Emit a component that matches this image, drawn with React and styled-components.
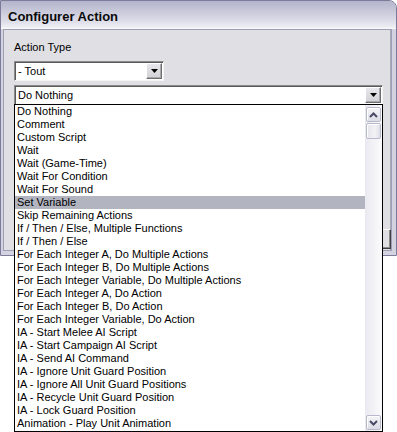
import React from "react";
import styled, { createGlobalStyle } from "styled-components";

const Global = createGlobalStyle`
  html, body { margin: 0; padding: 0; background: #ffffff; }
  body { font-family: "Liberation Sans", Arial, sans-serif; }
`;

const Stage = styled.div`
  position: relative;
  width: 397px;
  height: 432px;
  overflow: hidden;
  background: #ffffff;
`;

const Window = styled.div`
  box-sizing: border-box;
  width: 397px;
  height: 256px;
  display: flex;
  flex-direction: column;
  border: 1px solid #7c7c9a;
  border-top-right-radius: 8px;
  background: linear-gradient(to right, #d2d2e0, #e6e6f0 40%, #d2d2e0);
  padding: 0 4px 4px 2px;
`;

const TitleBar = styled.div`
  box-sizing: border-box;
  height: 28px;
  margin: 0 -4px 0 -2px;
  padding: 8px 0 0 7px;
  border-top-right-radius: 7px;
  background: linear-gradient(to bottom, #b4b4cb 0%, #c8c8da 35%, #dcdce8 70%, #ececf2 92%, #fbfbfd 100%);
  font: bold 13px/15px "Liberation Sans", Arial, sans-serif;
  color: #0a0a0a;
  white-space: nowrap;
`;

const Frame = styled.div`
  flex: 1;
  display: flex;
  flex-direction: column;
  background: #e0dfe3;
  border: 1px solid #9e9eb4;
  padding: 11px 0 0 10px;
  box-shadow: inset -4px 0 0 -3px #a9a9b8;
`;

const Label = styled.div`
  font: 11px/13px "Liberation Sans", Arial, sans-serif;
  color: #000;
`;

const Combo = styled.div`
  box-sizing: border-box;
  width: ${(p) => p.$w}px;
  height: 20px;
  margin-top: ${(p) => p.$mt}px;
  display: flex;
  align-items: center;
  padding: 1px;
  background: #fff;
  border: 1px solid;
  border-color: #8a8a8a #f4f4f4 #f4f4f4 #8a8a8a;
  box-shadow: inset 1px 1px 0 #5a5a5a;
`;

const ComboText = styled.div`
  flex: 1;
  padding-left: 2px;
  font: 11px/13px "Liberation Sans", Arial, sans-serif;
  color: #000;
  white-space: nowrap;
  overflow: hidden;
`;

const ArrowButton = styled.div`
  box-sizing: border-box;
  width: 16px;
  height: 16px;
  display: flex;
  align-items: center;
  justify-content: center;
  background: linear-gradient(#e8e8ec, #d2d1d6);
  border: 1px solid;
  border-color: #ffffff #6e6e6e #6e6e6e #ffffff;
  box-shadow: inset -1px -1px 0 #a8a8ae;
`;

const Spacer = styled.div`
  flex: 1;
`;

const ButtonRow = styled.div`
  display: flex;
  justify-content: flex-end;
  padding-bottom: 1px;
`;

const PushButton = styled.div`
  box-sizing: border-box;
  width: 75px;
  height: 20px;
  background: #e0dfe3;
  border: 1px solid;
  border-color: #ffffff #404040 #404040 #ffffff;
  box-shadow: inset -1px -1px 0 #8c8c8c;
`;

const Popup = styled.div`
  position: absolute;
  left: 14px;
  top: 104px;
  box-sizing: border-box;
  width: 369px;
  height: 328px;
  display: flex;
  background: #fff;
  border: 1px solid #000;
`;

const Items = styled.div`
  flex: 1;
  min-width: 0;
  display: flex;
  flex-direction: column;
`;

const Item = styled.div`
  height: 13px;
  padding-left: 2px;
  font: 11px/13px "Liberation Sans", Arial, sans-serif;
  color: #000;
  white-space: nowrap;
  overflow: hidden;
  background: ${(p) => (p.$selected ? "#b2b4c0" : "transparent")};
`;

const ScrollBar = styled.div`
  box-sizing: border-box;
  width: 17px;
  display: flex;
  flex-direction: column;
  padding: 2px 1px 1px 1px;
  background: linear-gradient(to right, #e9e9f0, #f6f6f9 70%, #fbfbfd);
`;

const ScrollButton = styled.div`
  box-sizing: border-box;
  width: 15px;
  height: 15px;
  display: flex;
  align-items: center;
  justify-content: center;
  border: 1px solid #b9b9cc;
  border-radius: 2px;
  background: linear-gradient(#f4f4f8, #dcdce6);
  box-shadow: inset 1px 1px 0 #ffffff;
`;

const Thumb = styled.div`
  box-sizing: border-box;
  width: 15px;
  height: 16px;
  margin-top: 1px;
  border: 1px solid #b9b9cc;
  border-radius: 2px;
  background: linear-gradient(to right, #e4e4ec, #f2f2f6 60%, #dedee8);
  box-shadow: inset 1px 1px 0 #ffffff;
`;

const DownTriangle = () => (
  <svg width="7" height="4" viewBox="0 0 7 4">
    <polygon points="0,0 7,0 3.5,4" fill="#000" />
  </svg>
);

const Chevron = ({ up }) => (
  <svg width="9" height="6" viewBox="0 0 9 6">
    <polyline
      points={up ? "1,5 4.5,1.5 8,5" : "1,1 4.5,4.5 8,1"}
      fill="none"
      stroke="#4a4a66"
      strokeWidth="2"
    />
  </svg>
);

const ITEMS = [
  "Do Nothing",
  "Comment",
  "Custom Script",
  "Wait",
  "Wait (Game-Time)",
  "Wait For Condition",
  "Wait For Sound",
  "Set Variable",
  "Skip Remaining Actions",
  "If / Then / Else, Multiple Functions",
  "If / Then / Else",
  "For Each Integer A, Do Multiple Actions",
  "For Each Integer B, Do Multiple Actions",
  "For Each Integer Variable, Do Multiple Actions",
  "For Each Integer A, Do Action",
  "For Each Integer B, Do Action",
  "For Each Integer Variable, Do Action",
  "IA - Start Melee AI Script",
  "IA - Start Campaign AI Script",
  "IA - Send AI Command",
  "IA - Ignore Unit Guard Position",
  "IA - Ignore All Unit Guard Positions",
  "IA - Recycle Unit Guard Position",
  "IA - Lock Guard Position",
  "Animation - Play Unit Animation",
];

export default function App() {
  return (
    <Stage>
      <Global />
      <Window>
        <TitleBar>Configurer Action</TitleBar>
        <Frame>
          <Label>Action Type</Label>
          <Combo $w={150} $mt={7}>
            <ComboText>- Tout</ComboText>
            <ArrowButton>
              <DownTriangle />
            </ArrowButton>
          </Combo>
          <Combo $w={369} $mt={4}>
            <ComboText>Do Nothing</ComboText>
            <ArrowButton>
              <DownTriangle />
            </ArrowButton>
          </Combo>
          <Spacer />
          <ButtonRow>
            <PushButton />
          </ButtonRow>
        </Frame>
      </Window>
      <Popup>
        <Items>
          {ITEMS.map((t) => (
            <Item key={t} $selected={t === "Set Variable"}>
              {t}
            </Item>
          ))}
        </Items>
        <ScrollBar>
          <ScrollButton>
            <Chevron up />
          </ScrollButton>
          <Thumb />
          <Spacer />
          <ScrollButton>
            <Chevron />
          </ScrollButton>
        </ScrollBar>
      </Popup>
    </Stage>
  );
}
